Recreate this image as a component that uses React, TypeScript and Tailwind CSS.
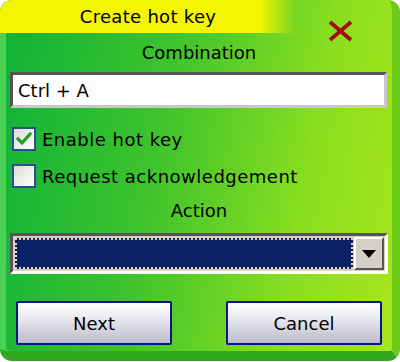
import React from "react";

const font = { fontFamily: '"DejaVu Sans", Tahoma, sans-serif' };

function Check({ checked }: { checked?: boolean }) {
  return (
    <div className="w-[24px] h-[24px] border-2 border-[#2d4f8f] bg-[linear-gradient(135deg,#dcdcd6,#ffffff)] flex items-center justify-center shrink-0">
      {checked && (
        <svg width="16" height="14" viewBox="0 0 16 14">
          <path d="M2 7 L6 11 L14 2" stroke="#20a020" strokeWidth="3.2" fill="none" strokeLinecap="square" />
        </svg>
      )}
    </div>
  );
}

export default function App() {
  return (
    <div className="w-[400px] h-[362px] bg-white" style={font}>
      <div className="w-[400px] h-[361px] rounded-[12px] overflow-hidden flex flex-col bg-[linear-gradient(100deg,#0db23a_0%,#3ec32c_40%,#8ade1e_75%,#a8e51c_100%)] shadow-[inset_6px_0_0_#4ccf55] border-r-[8px] border-r-[#6ccb16] border-b-[10px] border-b-[#2fa81e] text-black">
        <div className="flex h-[33px] shrink-0">
          <div className="w-[296px] h-[33px] bg-[linear-gradient(to_right,#f4f500_88%,rgba(244,245,0,0))] flex items-center justify-center text-[18px] tracking-[0.3px]">
            Create hot key
          </div>
          <div className="flex-1 flex items-start justify-center pr-[8px]">
            <svg className="mt-[20px]" width="27" height="22" viewBox="0 0 27 22">
              <path d="M3 2 L24 20 M24 2 L3 20" stroke="#a40d0d" strokeWidth="3.8" />
            </svg>
          </div>
        </div>
        <div className="h-[39px] flex items-center justify-center text-[18px] pl-[6px]">Combination</div>
        <div className="ml-[10px] w-[377px] h-[36px] bg-white border-t-[3px] border-l-[3px] border-t-[#555] border-l-[#555] border-b-[3px] border-r-[3px] border-b-[#c8c8c8] border-r-[#c8c8c8] flex items-center px-[5px] text-[18px]">
          Ctrl + A
        </div>
        <div className="flex items-center gap-[6px] ml-[12px] mt-[19px] h-[24px] text-[18px] tracking-[0.5px]">
          <Check checked />
          <span>Enable hot key</span>
        </div>
        <div className="flex items-center gap-[6px] ml-[12px] mt-[13px] h-[24px] text-[18px] tracking-[0.5px]">
          <Check />
          <span>Request acknowledgement</span>
        </div>
        <div className="h-[45px] flex items-center justify-center text-[18px] pl-[6px]">Action</div>
        <div className="ml-[10px] w-[378px] h-[41px] border-t-[3px] border-l-[3px] border-t-[#555] border-l-[#555] border-b-[3px] border-r-[3px] border-b-white border-r-white bg-[#d4d0c8] flex items-stretch">
          <div className="flex-1 m-[2px] mr-[1px] bg-[#0b2366] border-2 border-dotted border-[#e8d8a0]" />
          <div className="w-[30px] my-[1px] mr-[1px] bg-[#d4d0c8] border-t-2 border-l-2 border-t-white border-l-white border-b-2 border-r-2 border-b-[#555] border-r-[#555] flex items-center justify-center">
            <svg width="14" height="8" viewBox="0 0 14 8">
              <path d="M0 0 H14 L7 8 Z" fill="#000" />
            </svg>
          </div>
        </div>
        <div className="flex justify-between ml-[16px] mr-[10px] mt-[27px]">
          <button className="w-[156px] h-[44px] border-2 border-[#0b1585] rounded-[2px] bg-[linear-gradient(to_bottom,#ffffff,#e8e8f0_40%,#bcbccc)] text-[18px] flex items-center justify-center" style={font}>
            Next
          </button>
          <button className="w-[156px] h-[44px] border-2 border-[#0b1585] rounded-[2px] bg-[linear-gradient(to_bottom,#ffffff,#e8e8f0_40%,#bcbccc)] text-[18px] flex items-center justify-center" style={font}>
            Cancel
          </button>
        </div>
      </div>
    </div>
  );
}
